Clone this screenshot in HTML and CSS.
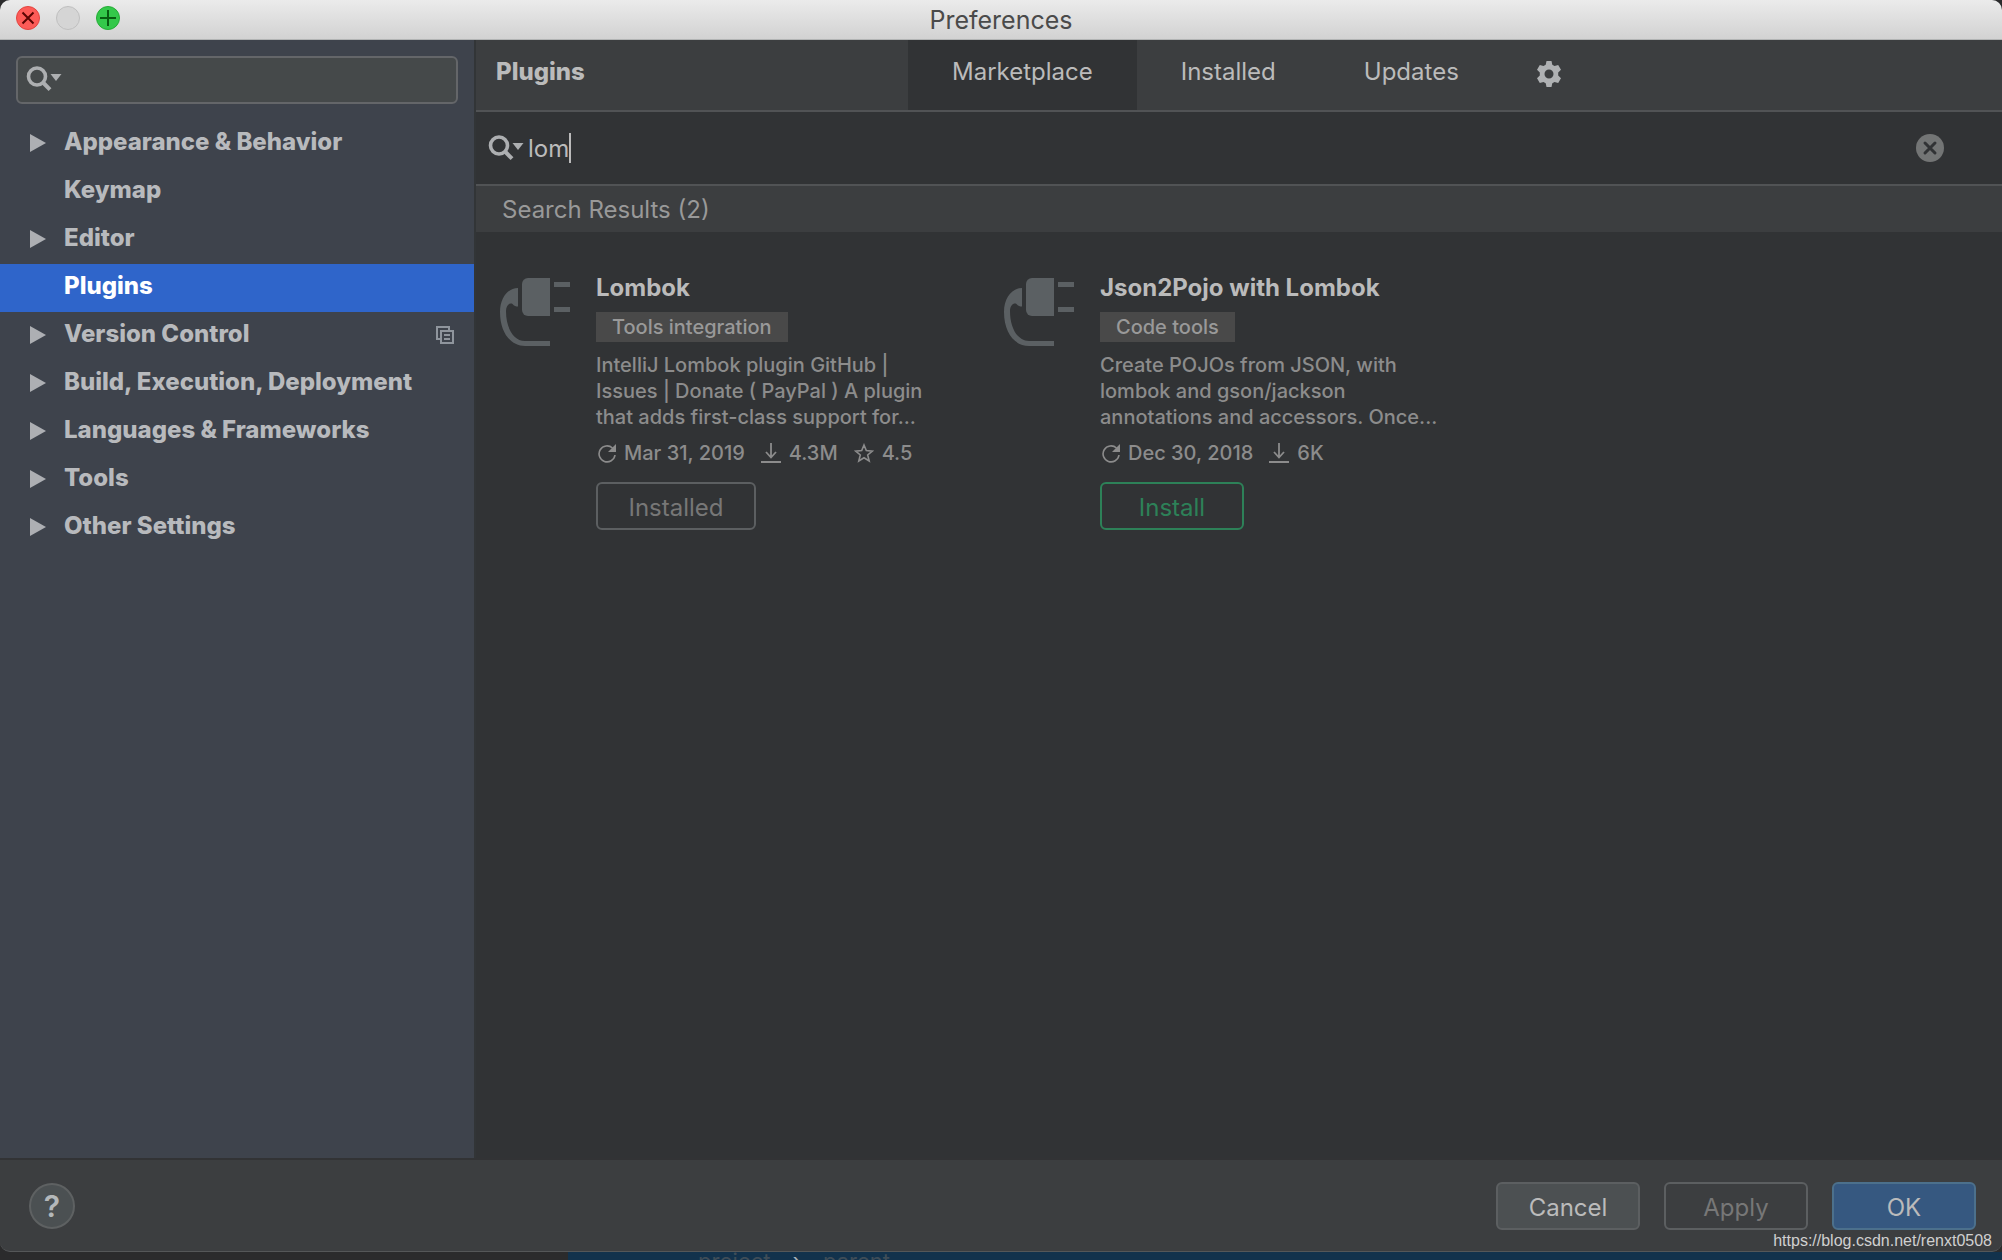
FILE: index.html
```html
<!DOCTYPE html>
<html lang="en">
<head>
    <meta charset="utf-8">
    <title>Preferences</title>
    <link rel="stylesheet" href="styles.css">
</head>
<body>
    <svg class="sprite" aria-hidden="true">
        <symbol id="icon-search" viewBox="0 0 36 26">
            <circle cx="11" cy="10.500" r="8.500" fill="none" stroke="currentColor" stroke-width="3.600"/>
            <path d="M17 16.500l7 7.200" stroke="currentColor" stroke-width="4" fill="none"/>
            <path d="M24.500 8h11L30 15z" fill="currentColor"/>
        </symbol>
        <symbol id="icon-plug" viewBox="0 0 70 68">
            <path d="M28 0h22v38H28a6 6 0 0 1-6-6V6a6 6 0 0 1 6-6z" fill="currentColor"/>
            <path d="M54 4h16v5H54zM54 29h16v5H54z" fill="currentColor"/>
            <path d="M18 10v18.500c-2 0-4-.5-5.500-2.500C10 24.500 6 27 6 33c0 17 7.500 30 19 30h25v5H25C11 68 0 55 0 34 0 20 8 10 18 10z" fill="currentColor"/>
        </symbol>
        <symbol id="icon-update" viewBox="0 0 20 20">
            <path d="M16.500 5A8 8 0 1 0 19 12" fill="none" stroke="currentColor" stroke-width="1.600"/>
            <path d="M20 1v8h-8z" fill="currentColor"/>
        </symbol>
        <symbol id="icon-download" viewBox="0 0 20 20">
            <path d="M10 0v14M5 9l5 5.500L15 9M0 19h20" fill="none" stroke="currentColor" stroke-width="1.800"/>
        </symbol>
        <symbol id="icon-star" viewBox="0 0 20 20">
            <path d="M10 2l2.300 5.600 6 .5-4.600 3.900 1.500 6L10 14.800 4.800 18l1.500-6L1.700 8.100l6-.5z" fill="none" stroke="currentColor" stroke-width="1.600"/>
        </symbol>
    </svg>

    <div class="window">
        <header class="titlebar">
            <div class="lights">
                <button class="light close" aria-label="Close">
                    <svg viewBox="0 0 24 24"><path d="M6.500 6.500l11 11M17.500 6.500l-11 11"/></svg>
                </button>
                <button class="light minimize" aria-label="Minimize" disabled></button>
                <button class="light zoom" aria-label="Zoom">
                    <svg viewBox="0 0 24 24"><path d="M12 4v16M4 12h16"/></svg>
                </button>
            </div>
            <h1>Preferences</h1>
        </header>

        <div class="content">
            <aside class="sidebar">
                <label class="settings-search">
                    <svg class="search-icon"><use href="#icon-search"/></svg>
                    <input type="text" aria-label="Search settings">
                </label>
                <nav class="tree">
                    <a href="#" class="expandable">Appearance &amp; Behavior</a>
                    <a href="#">Keymap</a>
                    <a href="#" class="expandable">Editor</a>
                    <a href="#" class="selected">Plugins</a>
                    <a href="#" class="expandable">Version Control
                        <svg class="project-icon" viewBox="0 0 18 18">
                            <path d="M4 13H1V1h12v3M5 5h12v12H5zM8 9h6M8 13h6" fill="none" stroke="currentColor" stroke-width="2"/>
                        </svg>
                    </a>
                    <a href="#" class="expandable">Build, Execution, Deployment</a>
                    <a href="#" class="expandable">Languages &amp; Frameworks</a>
                    <a href="#" class="expandable">Tools</a>
                    <a href="#" class="expandable">Other Settings</a>
                </nav>
            </aside>

            <main class="plugins">
                <div class="tabs">
                    <h2>Plugins</h2>
                    <button class="tab active">Marketplace</button>
                    <button class="tab">Installed</button>
                    <button class="tab">Updates</button>
                    <button class="gear" aria-label="Plugin settings">
                        <svg viewBox="0 0 24 26">
                            <path fill="currentColor" fill-rule="evenodd" d="M9.500 0h5l.8 3.800 2.200 1.300L21.200 4 24 8.700l-2.800 2.700v3.200L24 17.300 21.200 22l-3.700-1.100-2.200 1.300-.8 3.800h-5l-.8-3.800-2.200-1.300L2.800 22 0 17.300l2.800-2.700v-3.200L0 8.700 2.800 4l3.700 1.100 2.200-1.300zM12 8.500a4.500 4.500 0 1 0 0 9 4.500 4.500 0 0 0 0-9z"/>
                        </svg>
                    </button>
                </div>

                <div class="plugin-search">
                    <svg class="search-icon"><use href="#icon-search"/></svg>
                    <input type="text" value="lom" aria-label="Search plugins">
                    <span class="caret"></span>
                    <button class="clear" aria-label="Clear search">
                        <svg viewBox="0 0 28 28">
                            <circle cx="14" cy="14" r="14" fill="#737575"/>
                            <path d="M9 9l10 10M19 9L9 19" stroke="#313335" stroke-width="3" stroke-linecap="round"/>
                        </svg>
                    </button>
                </div>

                <h3 class="results-title">Search Results (2)</h3>

                <div class="results">
                    <article class="card">
                        <svg class="plug"><use href="#icon-plug"/></svg>
                        <div class="info">
                            <h4>Lombok</h4>
                            <span class="tag">Tools integration</span>
                            <p>IntelliJ Lombok plugin GitHub |<br>Issues | Donate ( PayPal ) A plugin<br>that adds first-class support for...</p>
                            <div class="meta">
                                <span><svg><use href="#icon-update"/></svg>Mar 31, 2019</span>
                                <span><svg><use href="#icon-download"/></svg>4.3M</span>
                                <span><svg><use href="#icon-star"/></svg>4.5</span>
                            </div>
                            <button class="btn installed" disabled>Installed</button>
                        </div>
                    </article>
                    <article class="card">
                        <svg class="plug"><use href="#icon-plug"/></svg>
                        <div class="info">
                            <h4>Json2Pojo with Lombok</h4>
                            <span class="tag">Code tools</span>
                            <p>Create POJOs from JSON, with<br>lombok and gson/jackson<br>annotations and accessors. Once...</p>
                            <div class="meta">
                                <span><svg><use href="#icon-update"/></svg>Dec 30, 2018</span>
                                <span><svg><use href="#icon-download"/></svg>6K</span>
                            </div>
                            <button class="btn install">Install</button>
                        </div>
                    </article>
                </div>
            </main>
        </div>

        <footer class="footer">
            <button class="help" aria-label="Help">?</button>
            <div class="actions">
                <button class="btn cancel">Cancel</button>
                <button class="btn apply" disabled>Apply</button>
                <button class="btn ok">OK</button>
            </div>
        </footer>
    </div>

    <!-- strip of the editor that shows below the dialog -->
    <div class="editor">
        <div class="breadcrumbs"><span>project</span><span class="arrow">&rsaquo;</span><span>parent</span></div>
    </div>
    <div class="watermark">https://blog.csdn.net/renxt0508</div>
</body>
</html>
```
FILE: styles.css
```css
* {
    box-sizing: border-box;
}

body {
    font-family: Inter, "Liberation Sans", sans-serif;
    font-size: 24px;
    color: #bbbbbb;
    background-color: #2b2b2c;
    margin: 0;
    height: 100vh;
    display: flex;
    flex-direction: column;
    overflow: hidden;
}

h1, h2, h3, h4, p {
    margin: 0;
}

button, input {
    font: inherit;
    color: inherit;
    background: none;
    border: none;
    padding: 0;
    outline: none;
}

svg {
    display: block;
    flex: none;
}

.sprite {
    position: absolute;
    width: 0;
    height: 0;
}

.window {
    flex: 1;
    min-height: 0;
    display: flex;
    flex-direction: column;
    background-color: #3c3e40;
    border-bottom: 1px solid #555758;
    border-radius: 10px;
    overflow: hidden;
}

/* title bar */
.titlebar {
    display: grid;
    grid-template-columns: 1fr auto 1fr;
    align-items: center;
    height: 40px;
    padding: 0 16px;
    background: linear-gradient(#ebebeb, #d2d2d2);
    border-bottom: 1px solid #b2b4b4;
}

.titlebar h1 {
    font-size: 25px;
    line-height: 38px;
    font-weight: 400;
    color: #4a4a4a;
}

.lights {
    display: flex;
    gap: 16px;
    margin-bottom: 3px;
}

.light {
    width: 24px;
    height: 24px;
    border-radius: 50%;
    border: 1px solid #bfbfbf;
    background-color: #d5d5d5;
}

.light svg {
    margin: -1px;
    width: 24px;
    height: 24px;
    fill: none;
    stroke-width: 2;
}

.close {
    background-color: #fc5b57;
    border-color: #e2443f;
}

.close svg {
    stroke: #5a0503;
}

.zoom {
    background-color: #34c84a;
    border-color: #25ac36;
}

.zoom svg {
    stroke: #075c10;
}

/* sidebar */
.content {
    flex: 1;
    min-height: 0;
    display: flex;
    border-bottom: 2px solid #323335;
}

.sidebar {
    width: 476px;
    flex: none;
    background-color: #3e434c;
    border-right: 2px solid #323537;
}

.settings-search {
    display: flex;
    gap: 8px;
    height: 48px;
    margin: 16px;
    padding: 8px;
    background-color: #45494a;
    border: 2px solid #646669;
    border-radius: 6px;
}

.settings-search input {
    flex: 1;
    min-width: 0;
}

.search-icon {
    width: 36px;
    height: 26px;
    color: #adafb1;
}

.tree a {
    display: flex;
    align-items: center;
    height: 48px;
    padding: 0 20px 6px 64px;
    font-weight: 800;
    color: #b8babd;
    text-decoration: none;
}

.tree .expandable {
    padding-left: 30px;
}

.expandable::before {
    content: "";
    width: 16px;
    height: 18px;
    margin: 4px 18px 0 0;
    background-color: #adafb3;
    clip-path: polygon(0 0, 100% 50%, 0 100%);
}

.tree .selected {
    color: #ffffff;
    background-color: #2f65ca;
}

.project-icon {
    width: 18px;
    height: 18px;
    margin: 4px 0 0 auto;
    color: #8f959d;
}

/* plugins page */
.plugins {
    flex: 1;
    min-width: 0;
    background-color: #313335;
}

.tabs {
    display: flex;
    height: 72px;
    background-color: #3c3e40;
    border-bottom: 2px solid #515355;
}

.tabs h2 {
    width: 432px;
    padding: 17px 20px;
    font-size: 24px;
    line-height: 30px;
    font-weight: 800;
}

.tab {
    padding: 0 44px 8px;
}

.tab.active {
    background-color: #313335;
}

.gear {
    margin-left: 34px;
    padding-bottom: 2px;
}

.gear svg {
    width: 24px;
    height: 26px;
    color: #afb1b3;
}

.plugin-search {
    display: flex;
    align-items: center;
    height: 74px;
    padding: 0 58px 0 12px;
    border-bottom: 2px solid #515355;
}

.plugin-search input {
    field-sizing: content;
    margin-left: 4px;
}

.caret {
    width: 2px;
    height: 30px;
    background-color: #bbbbbb;
}

.clear {
    margin-left: auto;
}

.clear svg {
    width: 28px;
    height: 28px;
}

.results-title {
    height: 46px;
    padding-left: 26px;
    background-color: #3c3e40;
    font-size: 24px;
    line-height: 48px;
    font-weight: 400;
    color: #999999;
}

.results {
    display: grid;
    grid-template-columns: repeat(auto-fill, 504px);
    padding: 40px 24px;
}

.card {
    display: flex;
    gap: 26px;
}

.plug {
    width: 70px;
    height: 68px;
    margin-top: 6px;
    color: #5b6063;
}

.info {
    font-size: 20px;
    font-weight: 500;
    color: #8c8c8c;
}

.info h4 {
    margin-bottom: 8px;
    font-size: 24px;
    line-height: 32px;
    color: #bbbbbb;
}

.tag {
    display: block;
    width: fit-content;
    padding: 0 16px;
    background-color: #494949;
    line-height: 30px;
    color: #999999;
}

.info p {
    margin: 10px 0;
    line-height: 26px;
    white-space: nowrap;
}

.meta {
    display: flex;
    gap: 16px;
    line-height: 26px;
}

.meta span {
    display: flex;
    align-items: center;
    gap: 8px;
}

.meta svg {
    width: 20px;
    height: 20px;
}

.btn {
    height: 48px;
    min-width: 144px;
    padding-top: 3px;
    border: 2px solid #5c5f61;
    border-radius: 6px;
}

.info .btn {
    margin-top: 16px;
    font-size: 24px;
    font-weight: 400;
}

.info .installed {
    min-width: 160px;
    color: #777777;
}

.install {
    border-color: #2d8158;
    color: #2d8158;
}

/* bottom bar */
.footer {
    display: flex;
    justify-content: space-between;
    align-items: center;
    height: 91px;
    padding: 0 26px 0 29px;
}

.help {
    width: 46px;
    height: 46px;
    border: 2px solid #5e6162;
    border-radius: 50%;
    background-color: #4b5052;
    font-size: 30px;
    font-weight: 600;
    line-height: 40px;
    color: #b4b8ba;
}

.actions {
    display: flex;
    gap: 24px;
}

.cancel {
    background-color: #4c5052;
}

.apply {
    color: #777777;
}

.ok {
    background-color: #365880;
    border-color: #4c708c;
}

.editor {
    height: 8px;
    margin-left: 568px;
    overflow: hidden;
    background-color: #12324c;
}

.breadcrumbs {
    display: flex;
    gap: 22px;
    padding-left: 130px;
    font-size: 22px;
    line-height: 18px;
    color: #3f4d58;
}

.arrow {
    color: #a5b0b8;
}

.watermark {
    position: absolute;
    right: 10px;
    bottom: 10px;
    font-family: "Liberation Sans", Arial, sans-serif;
    font-size: 16px;
    line-height: 18px;
    color: #d0d0d0;
}
```
